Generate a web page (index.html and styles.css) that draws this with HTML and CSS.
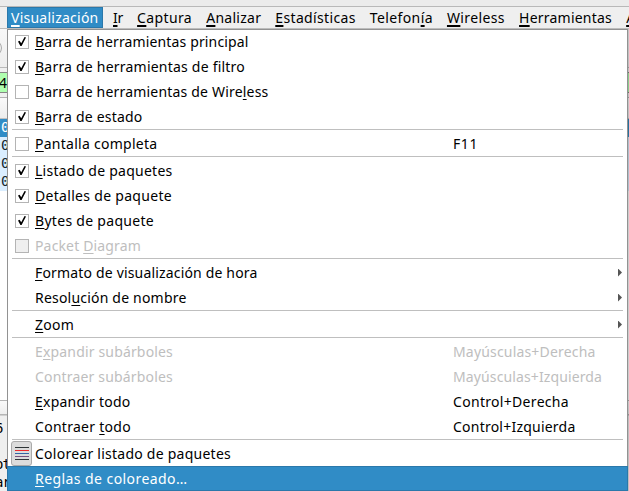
FILE: index.html
```html
<!DOCTYPE html>
<html lang="es">
<head>
<meta charset="utf-8">
<title>Visualización</title>
<link rel="stylesheet" href="styles.css">
</head>
<body>
<div class="window">
  <div class="titlebar"></div>
  <nav class="menubar">
    <span class="tab active"><span data-fit="87.500"><u>V</u>isualización</span></span>
    <span class="tab"><span data-fit="10"><u>I</u>r</span></span>
    <span class="tab"><span data-fit="55"><u>C</u>aptura</span></span>
    <span class="tab"><span data-fit="55"><u>A</u>nalizar</span></span>
    <span class="tab"><span data-fit="80.500"><u>E</u>stadísticas</span></span>
    <span class="tab"><span data-fit="63">Telefon<u>í</u>a</span></span>
    <span class="tab"><span data-fit="58"><u>W</u>ireless</span></span>
    <span class="tab"><span data-fit="93"><u>H</u>erramientas</span></span>
    <span class="tab"><span><u>A</u></span></span>
  </nav>
  <div class="toolbar"><svg width="8" height="16" viewBox="0 0 8 16"><path d="M-1 2Q4 8-1 14" fill="none" stroke="#aaa"/></svg></div>
  <div class="filterbar"><div class="filter">4</div></div>
  <div class="header"></div>
  <div class="packet selected">0</div>
  <div class="packet">0</div>
  <div class="packet">0</div>
  <div class="packet">0</div>
  <div class="blank"></div>
  <div class="split"></div>
  <div class="details"><div>6</div><div></div><div class="pair">ot</div><div class="pair">ar</div></div>
</div>

<div class="menu">
  <div class="item"><i class="box on"></i><span class="label" data-fit="213.500"><u>B</u>arra de herramientas principal</span></div>
  <div class="item"><i class="box on"></i><span class="label" data-fit="210"><u>B</u>arra de herramientas de filtro</span></div>
  <div class="item"><i class="box"></i><span class="label" data-fit="233.500">Barra de herramientas de Wire<u>l</u>ess</span></div>
  <div class="item"><i class="box on"></i><span class="label" data-fit="107.500"><u>B</u>arra de estado</span></div>
  <hr>
  <div class="item"><i class="box"></i><span class="label" data-fit="122.500"><u>P</u>antalla completa</span><span class="key" data-fit="25">F11</span></div>
  <hr>
  <div class="item"><i class="box on"></i><span class="label" data-fit="137.500"><u>L</u>istado de paquetes</span></div>
  <div class="item"><i class="box on"></i><span class="label" data-fit="137"><u>D</u>etalles de paquete</span></div>
  <div class="item"><i class="box on"></i><span class="label" data-fit="119"><u>B</u>ytes de paquete</span></div>
  <div class="item disabled"><i class="box"></i><span class="label" data-fit="106">Packet <u>D</u>iagram</span></div>
  <hr>
  <div class="item sub"><span class="label" data-fit="222.500"><u>F</u>ormato de visualización de hora</span></div>
  <div class="item sub"><span class="label" data-fit="151.500">Resol<u>u</u>ción de nombre</span></div>
  <hr>
  <div class="item sub"><span class="label" data-fit="39"><u>Z</u>oom</span></div>
  <hr>
  <div class="item disabled"><span class="label" data-fit="138">E<u>x</u>pandir subárboles</span><span class="key" data-fit="142.500">Mayúsculas+Derecha</span></div>
  <div class="item disabled"><span class="label" data-fit="138">Contraer subárboles</span><span class="key" data-fit="149">Mayúsculas+Izquierda</span></div>
  <div class="item"><span class="label" data-fit="95.500"><u>E</u>xpandir todo</span><span class="key" data-fit="116">Control+Derecha</span></div>
  <div class="item"><span class="label" data-fit="96">Contraer <u>t</u>odo</span><span class="key" data-fit="122.500">Control+Izquierda</span></div>
  <hr>
  <div class="item"><i class="colors"><b class="c1"></b><b class="c2"></b><b class="c3"></b><b class="c4"></b><b class="c5"></b></i><span class="label" data-fit="196">Colorear listado de paquetes</span></div>
  <div class="item hover"><span class="label" data-fit="152.500"><u>R</u>eglas de coloreado…</span></div>
</div>
<script src="fit.js"></script>
</body>
</html>
```

FILE: styles.css
```css
* { box-sizing: border-box; }
body {
  margin: 0;
  width: 629px;
  height: 491px;
  overflow: hidden;
  position: relative;
  background: #fff;
  color: #000;
  font: 14px/25px "Noto Sans", "Open Sans", sans-serif;
}
u {
  text-decoration: underline;
  text-decoration-thickness: 1px;
  text-underline-offset: 2px;
  text-decoration-skip-ink: none;
}
[data-fit] { display: inline-block; white-space: nowrap; }

.window { display: flex; flex-direction: column; height: 491px; overflow: hidden; }
.titlebar { height: 7px; flex: none; background: #ebebeb; border-bottom: 1px solid #b8b8b8; }
.menubar {
  display: flex;
  flex: none;
  height: 22px;
  padding-left: 7px;
  background: #efefef;
  border-bottom: 1px solid #bcbcbc;
  line-height: 21px;
  white-space: nowrap;
}
.menubar u { text-decoration-thickness: 2px; }
.tab { flex: none; padding: 0 4.1px 0 10px; }
.tab.active { width: 96px; padding: 0 4px; background: #308cc6; color: #fff; box-shadow: inset 0 0 0 1px #2b78aa; }
.toolbar { height: 39px; flex: none; padding-top: 11px; background: linear-gradient(#f8f8f8, #ededed); border-bottom: 1px solid #b9b9b9; line-height: 0; }
.filterbar { height: 30px; flex: none; padding-top: 4px; background: #efefef; border-bottom: 1px solid #b3b3b3; }
.filter { height: 21px; background: #afffaf; border: solid #878787; border-width: 1px 0; font: 14px/20px "Noto Sans", sans-serif; text-indent: -1px; }
.header { height: 21px; flex: none; background: linear-gradient(#fafafa, #ededed); border-bottom: 1px solid #c0c0c0; }
.packet { height: 18px; flex: none; padding-left: 1px; background: #daeeff; color: #12272e; font: 14px/17px "DejaVu Sans Mono", monospace; }
.packet.selected { background: #308cc6; color: #fff; }
.blank { height: 209px; flex: none; background: #fff; }
.split { height: 15px; flex: none; background: linear-gradient(#fafafa, #eee); border: solid #b5b5b5; border-width: 1px 0; }
.details { flex: 1; padding-top: 3px; background: #efefef; border-top: 1px solid #d0d0d0; font: 14px/18px "DejaVu Sans Mono", monospace; }
.details div { height: 18px; margin-left: -5px; }
.details .pair { letter-spacing: -1px; margin-left: -5px; }

.menu {
  position: absolute;
  left: 7px;
  top: 29px;
  width: 621px;
  height: 462px;
  background: #fff;
  border: solid #929292;
  border-width: 0 1px;
  box-shadow: inset 0 1px #929292, 1px 0 rgba(0, 0, 0, .2);
}
.menu hr { height: 2px; margin: 0 4px; border: 0; border-top: 1px solid #bfbfbf; }
.item {
  display: grid;
  grid-template-columns: 27px 418px 1fr;
  align-items: center;
  height: 25px;
}
.label { grid-column: 2; grid-row: 1; justify-self: start; }
.key { grid-column: 3; justify-self: start; }
.disabled { color: #bebebe; }
.hover { margin: 0 -1px; padding: 0 1px; background: #308cc6; color: #fff; box-shadow: inset 0 0 0 1px #2b78aa; }
.box { grid-column: 1; grid-row: 1; width: 14px; height: 14px; margin: 1px 0 0 7px; border: 1px solid #b4b4b4; background: #fff; }
.disabled .box { background: #efefef; }
.box.on::after {
  content: "";
  display: block;
  width: 8px;
  height: 9px;
  margin: 1px 0 0 2px;
  background: #000;
  clip-path: polygon(0 50%, 20% 42%, 40% 70%, 82% 0, 100% 5%, 45% 100%, 30% 100%);
}
.sub::after {
  content: "";
  grid-column: 3;
  grid-row: 1;
  justify-self: end;
  width: 4px;
  height: 8px;
  margin-right: 5px;
  background: #555;
  clip-path: polygon(0 0, 100% 50%, 0 100%);
}
.colors {
  grid-column: 1;
  grid-row: 1;
  display: flex;
  flex-direction: column;
  gap: 2px;
  width: 21px;
  height: 25px;
  margin-left: 3px;
  padding: 5px 3px 0;
  border: 1px solid #aaa;
  border-radius: 3px;
  background: #dcdcdc;
}
.colors b { flex: none; width: 14px; height: 1px; background: #2e3436; }
.colors .c2 { background: #ef2929; }
.colors .c3 { background: #3465a4; }
.colors .c4 { background: #75507b; }
```

FILE: fit.js
```js
// Spread each label's letters evenly over its intended width.
document.querySelectorAll("[data-fit]").forEach(function (el) {
  var width = el.getBoundingClientRect().width;
  var gap = (parseFloat(el.dataset.fit) - width) / el.textContent.length;
  el.style.letterSpacing = gap + "px";
});
```
